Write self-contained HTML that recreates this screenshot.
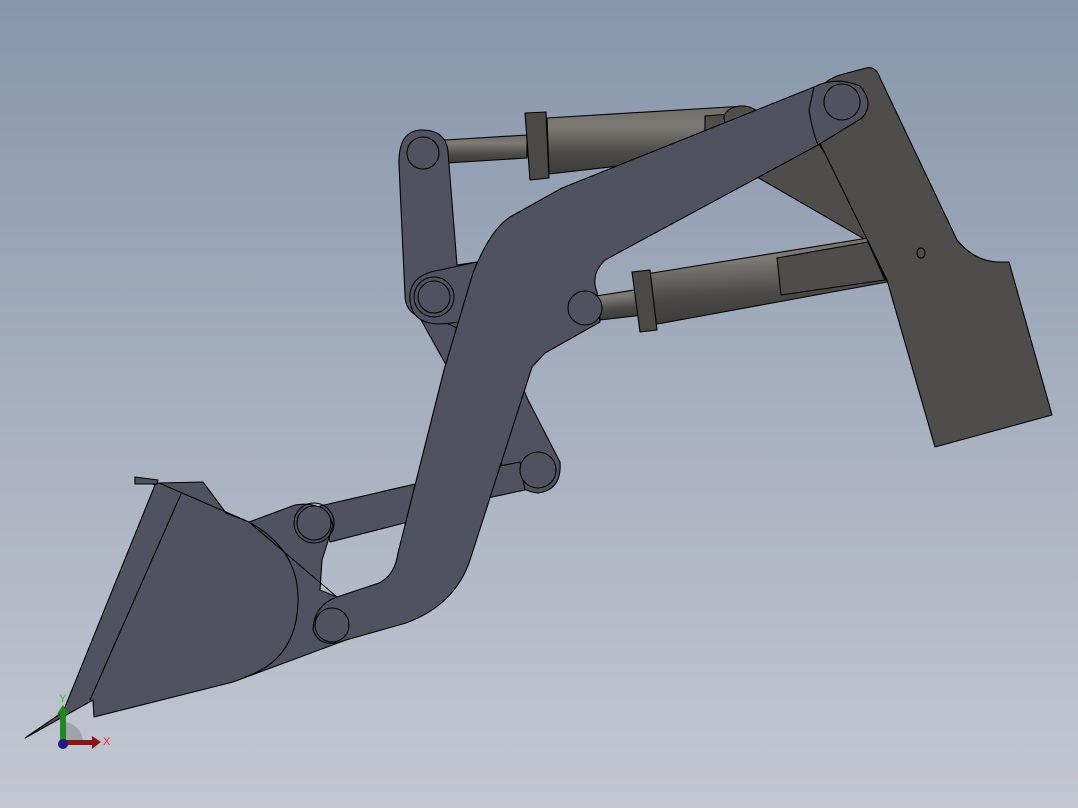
<!DOCTYPE html>
<html><head><meta charset="utf-8"><style>
html,body{margin:0;padding:0;width:1078px;height:808px;overflow:hidden}
body{background:linear-gradient(180deg,#8796ab 0%,#a3adbd 45%,#c4c7d2 100%)}
svg{position:absolute;left:0;top:0}
</style></head><body>
<svg width="1078" height="808" viewBox="0 0 1078 808" xmlns="http://www.w3.org/2000/svg">
<defs>
<linearGradient id="cyl" x1="0" y1="0" x2="0" y2="1">
<stop offset="0" stop-color="#6e6c68"/><stop offset="0.3" stop-color="#7d7b76"/><stop offset="0.7" stop-color="#4a4946"/><stop offset="1" stop-color="#3c3b39"/></linearGradient>
<linearGradient id="cyl2" x1="0" y1="0" x2="0.15" y2="1">
<stop offset="0" stop-color="#6e6c68"/><stop offset="0.3" stop-color="#7d7b76"/><stop offset="0.7" stop-color="#4a4946"/><stop offset="1" stop-color="#3c3b39"/></linearGradient>
</defs>
<g stroke="#000" stroke-width="1.1" stroke-linejoin="round">
<!-- upper cylinder -->
<polygon points="547,118 745,106 760,112 760,150 549,174" fill="url(#cyl)"/>
<polygon points="705,116 730,114 730,135 705,135" fill="#4f4e4b"/>
<ellipse cx="742" cy="118" rx="18" ry="12" fill="#4f4e4b"/>
<polygon points="445,140 527,135 527,158 447,163" fill="url(#cyl)"/>
<polygon points="525,113 546,112 549,178 530,180" fill="#4a4946"/>
<!-- brace -->
<polygon points="818,143 757,177 866,240 880,232" fill="#4e4d4b"/>
<!-- lower cylinder -->
<polygon points="640,275 868,238 887,282 652,325" fill="url(#cyl2)"/>
<polygon points="777,258 868,242 885,280 781,295" fill="#4e4d4b"/>
<polygon points="596,296 640,289 643,315 600,320" fill="url(#cyl2)"/>
<polygon points="632,272 650,270 657,330 640,332" fill="#4a4946"/>
<!-- right plate -->
<path d="M812,127 Q808,85 840,75 L866,68 Q876,66 880,78 L957,240 Q975,262 1000,262 L1009,262 L1052,415 L935,447 L887,280 Z" fill="#4e4d4b"/>
<ellipse cx="921" cy="253" rx="4" ry="5" fill="#4e4d4b"/>
<!-- lower cross link -->
<path d="M410,300 L470,265 L528,400 L560,462 Q562,490 538,493 Q520,492 505,470 L460,390 Z" fill="#50525f"/>
<!-- bucket bar -->
<polygon points="320,506 415,484 408,522 330,542" fill="#50525f"/>
<polygon points="480,470 520,462 525,490 478,500" fill="#50525f"/>
<!-- left link -->
<path d="M399,165 Q398,130 422,130 Q446,130 448,152 L457,265 L477,262 L461,330 L440,320 Q405,320 405,295 Z" fill="#50525f"/>
<path d="M410,300 Q408,275 440,270 L477,262 L462,322 L440,324 Q412,324 410,300 Z" fill="#50525f"/>
<!-- bucket -->
<path d="M25,738 L63,712 L155,485 L135,477 L136,482 L159,483 L203,482 L226,513 L249,522 L295,505 Q325,500 333,525 L322,560 L320,590 L337,597 L352,620 L346,640 L233,682 L94,717 L93,700 Z" fill="#50525f"/>
<path d="M249,522 Q300,550 298,603 Q296,660 245,677" fill="none"/>
<path d="M159,483 L249,522 L337,597" fill="none"/>
<path d="M181,494 L90,700" fill="none"/>
<path d="M135,477 L135,484 L157,484 L158,480 Z" fill="#50525f"/>
<!-- main arm -->
<path d="M814,87 Q836,76 860,86 Q875,104 862,118 L818,145 L605,260 Q590,275 597,292 L600,322 L545,353 L532,367 L470,560 Q455,605 406,623 L346,640 Q320,650 313,630 Q314,605 337,597 L379,583 Q395,575 398,553 L444,370 L473,273 Q490,230 510,217 L562,188 Z" fill="#50525f"/>
<path d="M814,87 L809,110 Q812,130 818,145" fill="none"/>
<!-- pins -->
<circle cx="842" cy="102" r="18" fill="#50525f"/>
<circle cx="423" cy="153" r="16" fill="#50525f"/>
<circle cx="434" cy="297" r="20" fill="none"/>
<circle cx="434" cy="297" r="16" fill="#50525f"/>
<circle cx="585" cy="308" r="17" fill="#50525f"/>
<circle cx="538" cy="470" r="18" fill="#50525f"/>
<circle cx="314" cy="523" r="20" fill="none"/>
<circle cx="314" cy="523" r="17" fill="#50525f"/>
<circle cx="332" cy="625" r="17" fill="#50525f"/>
</g>
<!-- triad -->
<path d="M63,742 L63,722 A20,20 0 0 1 83,742 Z" fill="#8a8d95" opacity="0.6"/>
<rect x="60" y="712" width="6" height="30" fill="#1a8a1a"/>
<polygon points="57,714 69,714 63,705" fill="#1a8a1a"/>
<rect x="63" y="740" width="30" height="5" fill="#8a1515"/>
<polygon points="92,736 92,749 101,742" fill="#8a1515"/>
<circle cx="63" cy="744" r="5" fill="#1a1a8a"/>
<text x="59" y="702" font-family="Liberation Sans,sans-serif" font-size="11" fill="#22cc22">Y</text>
<text x="103" y="745" font-family="Liberation Sans,sans-serif" font-size="11" fill="#ee2222">X</text>
</svg>
</body></html>
